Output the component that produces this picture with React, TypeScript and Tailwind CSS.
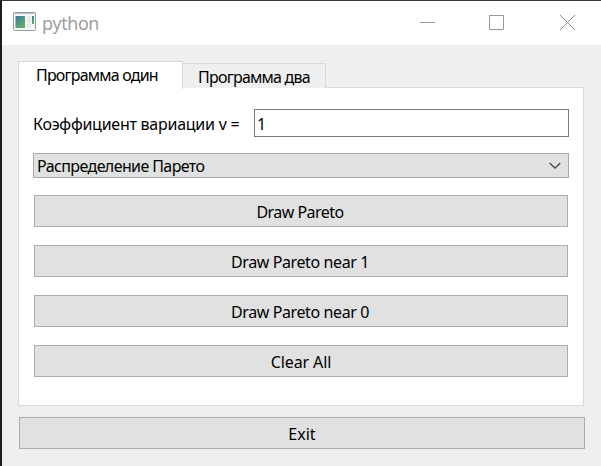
import React from "react";

function PushButton({ children }: { children: React.ReactNode }) {
  return (
    <button className="flex h-8 w-full items-center justify-center border border-[#adadad] bg-[#e1e1e1] pt-0.5 text-base leading-none">
      {children}
    </button>
  );
}

function AppIcon() {
  return (
    <svg width="24" height="20" viewBox="0 0 24 20" className="shrink-0">
      <defs>
        <linearGradient id="pane" x1="0" y1="0" x2="0.6" y2="1">
          <stop offset="0" stopColor="#41749f" />
          <stop offset="1" stopColor="#5fb06c" />
        </linearGradient>
      </defs>
      <rect x="0.5" y="0.5" width="22" height="18" rx="1" fill="#f5f6f6" stroke="#9299a0" />
      <path d="M1 1.500h21" stroke="#b9c2cc" />
      <rect x="2.5" y="4" width="9.5" height="12" fill="url(#pane)" />
      <rect x="14" y="4" width="4" height="7" fill="#e8e9e9" />
      <rect x="14" y="12" width="4" height="4" fill="#e8e9e9" />
      <rect x="19" y="4" width="2" height="8" fill="url(#pane)" />
    </svg>
  );
}

export default function App() {
  return (
    <div className="h-[466px] w-[601px] overflow-hidden border-l-2 border-t border-l-[#1c1b1e] border-t-[#38383b] bg-[#efefef] font-['Noto_Sans',sans-serif] text-base text-black">
      <header className="flex h-11 items-start bg-white pl-[11px]">
        <div className="flex pt-[11px]">
          <AppIcon />
        </div>
        <span className="ml-[5px] mt-2.5 font-['Open_Sans',sans-serif] text-[18px] leading-6 tracking-[-0.4px] text-[#999]">python</span>
        <div className="ml-auto mr-[25px] mt-3.5 flex">
          <svg width="16" height="16" stroke="#999" fill="none"><path d="M0 7.500h15" /></svg>
          <svg width="16" height="16" stroke="#999" fill="none" className="ml-[53px]"><path d="M0.500 0.500h14v14h-14z" /></svg>
          <svg width="16" height="16" stroke="#8c8c8c" fill="none" className="ml-[55px]"><path d="M0 0l15 15M15 0l-15 15" /></svg>
        </div>
      </header>

      <main className="pl-4 pt-4">
        <div className="flex h-[27px] items-end">
          <div className="z-10 -mb-px flex h-7 w-[165px] self-start border border-b-0 border-[#d9d9d9] bg-white pl-[17px] pt-0.5 leading-[22px] tracking-[-0.8px]">
            Программа один
          </div>
          <div className="flex h-[25px] w-[143px] border border-b-0 border-l-0 border-[#d9d9d9] bg-[#efefef] pl-[15px] pt-0.5 leading-[22px] tracking-[-0.76px]">
            Программа два
          </div>
        </div>
        <section className="-mt-px h-[319px] w-[566px] border border-[#d9d9d9] bg-white pl-3.5 pt-[21px]">
          <div className="flex h-7 w-[536px] items-center justify-between">
            <label className="pt-0.5 leading-[22px] tracking-[-0.25px]">Коэффициент вариации v =</label>
            <input defaultValue="1" className="h-7 w-[315px] border border-[#7a7a7a] bg-white px-0.5 pt-0.5 leading-[22px] outline-none" />
          </div>
          <div className="mt-4 flex h-[25px] w-[536px] items-center justify-between border border-[#a9abaa] bg-[#e0e2e1] pl-[3px] pr-[7px]">
            <span className="leading-[22px] tracking-[-0.6px]">Распределение Парето</span>
            <svg width="12" height="8" fill="none" stroke="#3c3c3c" strokeWidth="1.200"><path d="M0.700 1l5.300 5.200L11.300 1" /></svg>
          </div>
          <div className="ml-px mt-[17px] flex w-[534px] flex-col gap-[18px]">
            <PushButton><span className="pr-[2px] tracking-[-0.55px]">Draw Pareto</span></PushButton>
            <PushButton><span className="pr-[2px] tracking-[-0.4px]">Draw Pareto near 1</span></PushButton>
            <PushButton><span className="pr-[2px] tracking-[-0.4px]">Draw Pareto near 0</span></PushButton>
            <PushButton><span className="tracking-[-0.1px]">Clear All</span></PushButton>
          </div>
        </section>
        <div className="ml-px mt-[11px] w-[566px]">
          <PushButton>Exit</PushButton>
        </div>
      </main>
    </div>
  );
}
